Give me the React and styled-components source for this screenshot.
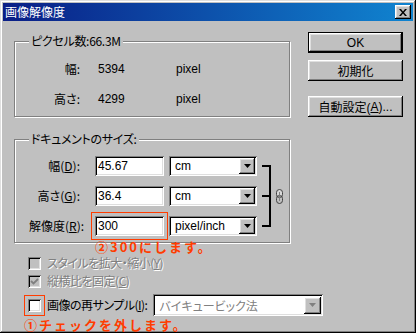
import React from "react";
import styled, { createGlobalStyle, css } from "styled-components";

const GlobalStyle = createGlobalStyle`
  html, body {
    margin: 0;
    padding: 0;
    background: #c0c0c0;
  }
  body {
    font-family: "Liberation Sans", "Noto Sans CJK JP", sans-serif;
    font-size: 12px;
    color: #000;
    font-feature-settings: "palt" 1;
  }
  * {
    box-sizing: border-box;
  }
`;

const raised = css`
  box-shadow: inset -1px -1px #000, inset 1px 1px #fff, inset -2px -2px #808080, inset 2px 2px #dfdfdf;
`;

const sunken = css`
  box-shadow: inset 1px 1px #808080, inset -1px -1px #fff, inset 2px 2px #000, inset -2px -2px #dfdfdf;
`;

const RED = "#ff3c00";

const Window = styled.div`
  width: 416px;
  height: 333px;
  padding: 3px;
  background: #c0c0c0;
  box-shadow: inset -1px -1px #000, inset 1px 1px #dfdfdf, inset -2px -2px #808080, inset 2px 2px #fff;
  display: flex;
  flex-direction: column;
`;

const TitleBar = styled.div`
  height: 18px;
  display: flex;
  align-items: center;
  padding: 0 2px;
  background: linear-gradient(to right, #0a1e86, #1084d0);
`;

const Title = styled.span`
  color: #fff;
  font-family: "Noto Sans CJK JP", sans-serif;
  font-size: 12px;
  line-height: 14px;
`;

const CloseBtn = styled.div`
  margin-left: auto;
  width: 16px;
  height: 14px;
  background: #c0c0c0;
  display: flex;
  align-items: center;
  justify-content: center;
  ${raised}
`;

const Body = styled.div`
  flex: 1;
  display: flex;
  padding: 11px 0 0 11px;
`;

const LeftCol = styled.div`
  width: 276px;
  padding-top: 2px;
  display: flex;
  flex-direction: column;
`;

const RightCol = styled.div`
  margin-left: 18px;
  width: 95px;
  display: flex;
  flex-direction: column;
`;

const Group = styled.fieldset`
  margin: ${(p) => p.$top || 0}px 0 0 0;
  padding: 0 0 ${(p) => p.$bottom}px 14px;
  min-width: 0;
  border: 1px solid #808080;
  box-shadow: 1px 1px 0 #fff, inset 1px 1px 0 #fff;
`;

const Legend = styled.legend`
  padding: 0 2px;
  line-height: 14px;
  background: #c0c0c0;
  font-family: "Noto Sans CJK JP", sans-serif;
  letter-spacing: -0.3px;
`;

const InfoGrid = styled.div`
  padding-top: 14px;
  display: grid;
  grid-template-columns: 51px 60px auto;
  column-gap: 18px;
  row-gap: 16px;
  grid-auto-rows: 14px;
  line-height: 14px;
`;

const InfoLabel = styled.span`
  text-align: right;
  white-space: nowrap;
  font-family: "Noto Sans CJK JP", sans-serif;
`;

const SizeGrid = styled.div`
  padding-top: 10px;
  display: grid;
  grid-template-columns: 61px 69px 88px 22px;
  grid-auto-rows: 20px;
  column-gap: 5px;
  row-gap: 10px;
  align-items: center;
`;

const FieldLabel = styled.span`
  text-align: right;
  padding-right: 10px;
  white-space: nowrap;
  font-family: "Noto Sans CJK JP", sans-serif;
  line-height: 14px;
`;

const U = styled.span`
  text-decoration: underline;
`;

const Field = styled.div`
  position: relative;
  height: 20px;
  padding: 0 2px 0 3px;
  background: #fff;
  display: flex;
  align-items: center;
  ${sunken}
  ${(p) =>
    p.$marked &&
    css`
      outline: 1px solid ${RED};
      outline-offset: 3px;
    `}
`;

const Select = styled.div`
  flex: none;
  width: ${(p) => p.$w || 88}px;
  height: ${(p) => p.$h || 20}px;
  padding: 2px;
  background: #fff;
  display: flex;
  align-items: center;
  ${sunken}
`;

const SelectText = styled.span`
  flex: 1;
  padding-left: 4px;
  white-space: nowrap;
  font-family: "Liberation Sans", "Noto Sans CJK JP", sans-serif;
  color: ${(p) => (p.$disabled ? "#808080" : "#000")};
`;

const ArrowBtn = styled.div`
  width: ${(p) => p.$size || 16}px;
  height: ${(p) => p.$size || 16}px;
  background: #c0c0c0;
  display: flex;
  align-items: center;
  justify-content: center;
  ${raised}
`;

const Bracket = styled.svg`
  grid-column: 4;
  grid-row: 1 / 4;
  align-self: stretch;
  overflow: visible;
`;

const Note = styled.span`
  position: absolute;
  left: ${(p) => p.$left || 0}px;
  top: calc(100% + ${(p) => p.$gap || 4}px);
  white-space: nowrap;
  color: ${RED};
  font-family: "Noto Sans CJK JP", sans-serif;
  font-feature-settings: normal;
  font-weight: bold;
  font-size: 13px;
  line-height: 13px;
  letter-spacing: ${(p) => p.$spacing || 1.5}px;
`;

const Options = styled.div`
  margin-top: 11px;
  padding-left: 14px;
  display: flex;
  flex-direction: column;
`;

const OptionRow = styled.div`
  height: ${(p) => p.$h || 18}px;
  margin-top: ${(p) => p.$top || 0}px;
  display: flex;
  align-items: center;
  gap: 6px;
`;

const Box = styled.div`
  position: relative;
  width: 13px;
  height: 13px;
  flex: none;
  background: ${(p) => (p.$disabled ? "#c0c0c0" : "#fff")};
  display: flex;
  align-items: center;
  justify-content: center;
  ${sunken}
  ${(p) =>
    p.$marked &&
    css`
      outline: 1px solid ${RED};
      outline-offset: 3px;
    `}
`;

const OptionText = styled.span`
  flex: none;
  white-space: nowrap;
  font-family: "Noto Sans CJK JP", sans-serif;
  line-height: 14px;
  letter-spacing: -0.5px;
  color: ${(p) => (p.$disabled ? "#808080" : "#000")};
  text-shadow: ${(p) => (p.$disabled ? "1px 1px 0 #fff" : "none")};
`;

const Button = styled.div`
  height: 21px;
  margin-top: ${(p) => p.$top || 0}px;
  display: flex;
  align-items: center;
  justify-content: center;
  background: #c0c0c0;
  font-family: "Liberation Sans", "Noto Sans CJK JP", sans-serif;
  white-space: nowrap;
  ${raised}
  ${(p) =>
    p.$default &&
    css`
      box-shadow: inset 0 0 0 1px #000, inset -2px -2px #000, inset 2px 2px #fff,
        inset -3px -3px #808080, inset 3px 3px #dfdfdf;
    `}
`;

function Triangle({ color = "#000" }) {
  return (
    <svg width="7" height="4" viewBox="0 0 7 4">
      <path d="M0 0h7L3.5 4z" fill={color} />
    </svg>
  );
}

function Dropdown({ value, w, h, arrow, disabled }) {
  return (
    <Select $w={w} $h={h}>
      <SelectText $disabled={disabled}>{value}</SelectText>
      <ArrowBtn $size={arrow}>
        <Triangle color={disabled ? "#808080" : "#000"} />
      </ArrowBtn>
    </Select>
  );
}

function CheckBox({ checked, disabled, marked, children }) {
  return (
    <Box $disabled={disabled} $marked={marked}>
      {checked && (
        <svg width="9" height="9" viewBox="0 0 9 9">
          <polyline points="1,4 3.5,6.5 8,2" fill="none" stroke="#808080" strokeWidth="1.8" />
        </svg>
      )}
      {children}
    </Box>
  );
}

const sizeRows = [
  { label: "幅", key: "D", value: "45.67", unit: "cm" },
  { label: "高さ", key: "G", value: "36.4", unit: "cm" },
  { label: "解像度", key: "R", value: "300", unit: "pixel/inch", marked: true },
];

export default function App() {
  return (
    <>
      <GlobalStyle />
      <Window>
        <TitleBar>
          <Title>画像解像度</Title>
          <CloseBtn>
            <svg width="8" height="7" viewBox="0 0 8 7">
              <path d="M0 0h2l2 2.5L6 0h2L5 3.5 8 7H6L4 4.5 2 7H0l3-3.5z" fill="#000" />
            </svg>
          </CloseBtn>
        </TitleBar>
        <Body>
          <LeftCol>
            <Group $bottom={10}>
              <Legend>ピクセル数:66.3M</Legend>
              <InfoGrid>
                <InfoLabel>幅:</InfoLabel>
                <span>5394</span>
                <span>pixel</span>
                <InfoLabel>高さ:</InfoLabel>
                <span>4299</span>
                <span>pixel</span>
              </InfoGrid>
            </Group>

            <Group $top={15} $bottom={6}>
              <Legend>ドキュメントのサイズ:</Legend>
              <SizeGrid>
                {sizeRows.map((r) => (
                  <React.Fragment key={r.key}>
                    <FieldLabel>
                      {r.label}(<U>{r.key}</U>):
                    </FieldLabel>
                    <Field $marked={r.marked}>
                      {r.value}
                      {r.marked && (
                        <Note $spacing={2} $gap={4}>
                          ②300にします。
                        </Note>
                      )}
                    </Field>
                    <Dropdown value={r.unit} />
                  </React.Fragment>
                ))}
                <Bracket width="22" height="80" viewBox="0 0 22 80">
                  <rect x="0" y="9" width="9" height="2" fill="#000" />
                  <rect x="0" y="39" width="9" height="2" fill="#000" />
                  <rect x="0" y="69" width="9" height="2" fill="#000" />
                  <rect x="7" y="9" width="2" height="62" fill="#000" />
                  <rect x="14.5" y="33.5" width="6" height="8" rx="3" fill="#d8d8d8" stroke="#404040" />
                  <rect x="14.5" y="39.5" width="6" height="8" rx="3" fill="none" stroke="#404040" />
                  <line x1="17.5" y1="36" x2="17.5" y2="45" stroke="#808080" />
                </Bracket>
              </SizeGrid>
            </Group>

            <Options>
              <OptionRow>
                <CheckBox disabled />
                <OptionText $disabled>
                  スタイルを拡大・縮小(<U>Y</U>)
                </OptionText>
              </OptionRow>
              <OptionRow>
                <CheckBox disabled checked />
                <OptionText $disabled>
                  縦横比を固定(<U>C</U>)
                </OptionText>
              </OptionRow>
              <OptionRow $h={22} $top={4}>
                <CheckBox marked>
                  <Note $left={-4} $gap={6} $spacing={2}>
                    ①チェックを外します。
                  </Note>
                </CheckBox>
                <OptionText>
                  画像の再サンプル(<U>I</U>):
                </OptionText>
                <Dropdown value="バイキュービック法" w={170} h={22} arrow={17} disabled />
              </OptionRow>
            </Options>
          </LeftCol>

          <RightCol>
            <Button $default>OK</Button>
            <Button $top={7}>初期化</Button>
            <Button $top={15}>
              自動設定(<U>A</U>)...
            </Button>
          </RightCol>
        </Body>
      </Window>
    </>
  );
}
